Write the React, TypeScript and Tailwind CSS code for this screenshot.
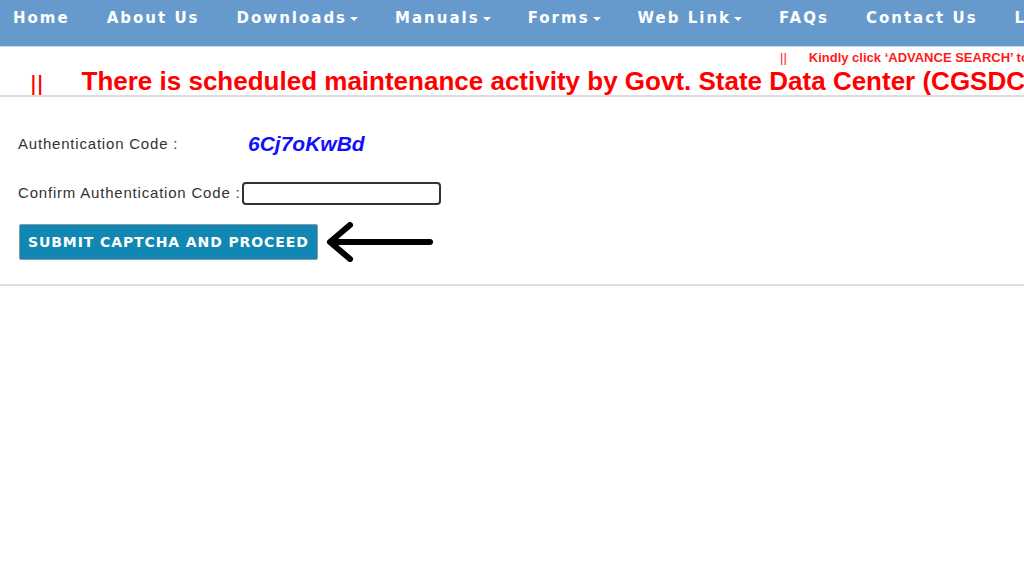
import React from "react";

const navItems: { label: string; caret?: boolean }[] = [
  { label: "Home" },
  { label: "About Us" },
  { label: "Downloads", caret: true },
  { label: "Manuals", caret: true },
  { label: "Forms", caret: true },
  { label: "Web Link", caret: true },
  { label: "FAQs" },
  { label: "Contact Us" },
  { label: "Login" },
];

const App = () => {
  return (
    <div className="w-[1024px] h-[576px] overflow-hidden bg-white font-['Liberation_Sans',Arial,sans-serif]">
      {/* top nav */}
      <div className="h-[47px] bg-[#6699cc] flex items-start pt-[7px] pl-[13px] gap-[37px] whitespace-nowrap border-b border-[#c9daee]">
        {navItems.map((item) => (
          <div
            key={item.label}
            className="flex items-center text-white font-bold text-[15px] tracking-[2px] font-['DejaVu_Sans',Verdana,sans-serif] shrink-0"
          >
            <span>{item.label}</span>
            {item.caret && (
              <span className="ml-[3px] w-0 h-0 border-l-[4px] border-r-[4px] border-t-[4px] border-l-transparent border-r-transparent border-t-white mt-[2px]" />
            )}
          </div>
        ))}
      </div>

      {/* marquee strip */}
      <div className="h-[50px] border-b-2 border-[#dddddd] flex flex-col overflow-hidden whitespace-nowrap">
        <div className="h-[20px] flex items-center pt-[2px] pl-[780px] text-[#ff1a1a] text-[13px] font-bold">
          <span className="font-normal">||</span>
          <span className="ml-[22px]">Kindly click ‘ADVANCE SEARCH’ to search records</span>
        </div>
        <div className="flex items-center h-[28px] pl-[30px] text-[#ff0000] text-[26px] font-bold leading-none">
          <span className="font-normal text-[26px] -mb-[8px]">||</span>
          <span className="ml-[38px]">
            There is scheduled maintenance activity by Govt. State Data Center (CGSDC)
          </span>
        </div>
      </div>

      {/* captcha form */}
      <div className="pl-[18px] pt-[32px] pb-[22px] border-b-2 border-[#dddddd]">
        <div className="flex items-center h-[30px]">
          <span className="w-[230px] text-[15px] tracking-[0.8px] text-[#333333]">Authentication Code :</span>
          <span className="text-[21px] font-bold italic text-[#1010ff]">6Cj7oKwBd</span>
        </div>
        <div className="flex items-center mt-[22px] h-[24px]">
          <span className="text-[15px] tracking-[0.8px] text-[#333333] mr-[2px]">Confirm Authentication Code :</span>
          <input
            type="text"
            className="w-[199px] h-[23px] border-2 border-[#333333] rounded-[4px] bg-white outline-none"
          />
        </div>
        <div className="flex items-center mt-[17px]">
          <button className="ml-[1px] h-[36px] px-[8px] bg-[#1187b3] border border-[#8a9aa4] rounded-[2px] text-white font-bold text-[14px] font-['DejaVu_Sans',Verdana,sans-serif] tracking-[0.9px]">
            SUBMIT CAPTCHA AND PROCEED
          </button>
          <svg width="110" height="40" viewBox="0 0 110 40" className="ml-[6px]">
            <path
              d="M106 20 H8 M26 3 L6 20 L26 37"
              fill="none"
              stroke="#000"
              strokeWidth="6"
              strokeLinecap="round"
              strokeLinejoin="round"
            />
          </svg>
        </div>
      </div>
    </div>
  );
};

export default App;
